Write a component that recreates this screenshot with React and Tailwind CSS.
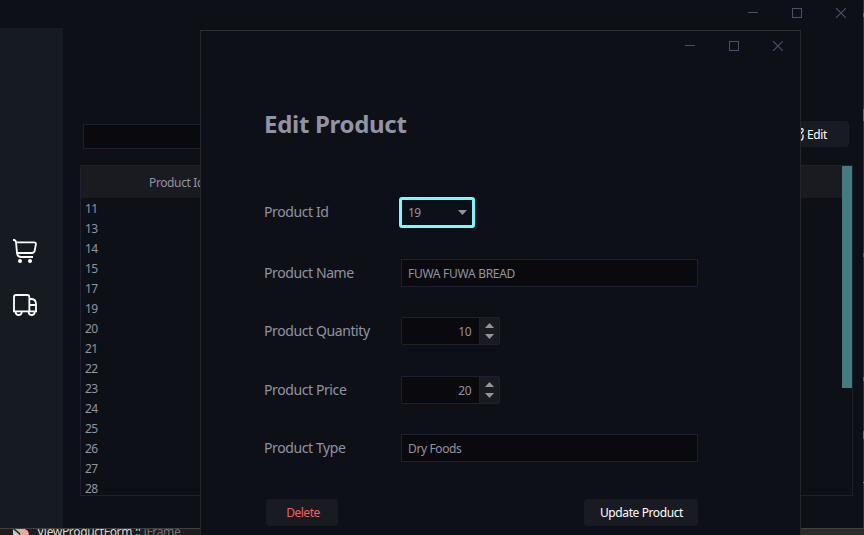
import React from "react";

const rows = [11, 13, 14, 15, 17, 19, 20, 21, 22, 23, 24, 25, 26, 27, 28];

function WindowControls() {
  return (
    <svg className="block h-[10px] w-[98px]" viewBox="0 0 98 10" fill="none" stroke="#4b506a" shapeRendering="crispEdges">
      <path d="M0 4.5H10M44.5 .5H53.5V9.5H44.5Z" />
      <path d="M88 0L98 10M98 0L88 10" shapeRendering="auto" strokeWidth="1.1" />
    </svg>
  );
}

function CartIcon() {
  return (
    <svg className="block h-6 w-6" viewBox="0 0 72 72" fill="none" stroke="#fff" strokeWidth="5.5" strokeLinejoin="round">
      <path d="M0 3H4Q8 4 9 9L12 42H56Q63 42 65 35L68.5 17Q69.5 10 63 10H9" />
      <path d="M12 40Q12 54 25 54H60" />
      <circle cx="21" cy="66" r="6" fill="#fff" stroke="none" />
      <circle cx="51" cy="66" r="6" fill="#fff" stroke="none" />
    </svg>
  );
}

function TruckIcon() {
  return (
    <svg className="block h-[22px] w-6" viewBox="0 0 72 66" fill="none" stroke="#fff" strokeWidth="5.5" strokeLinejoin="round">
      <path d="M3 52V9Q3 3 9 3H43Q49 3 49 9V52M49 15H56Q69 16 69 30V52M49 33H69M0 52H72" />
      <path d="M8 52V55Q9 63 17 63T26 55V52M47 52V55Q48 63 56 63T65 55V52" />
    </svg>
  );
}

function Arrow({ up }) {
  return (
    <svg className="block h-[5px] w-[9px]" viewBox="0 0 9 5" fill="#9395a3">
      <path d={up ? "M4.5 0L9 5H0Z" : "M0 0H9L4.5 5Z"} />
    </svg>
  );
}

function Field({ label, children, className }) {
  return (
    <div className={"flex items-center " + className}>
      <div className="w-[137px] shrink-0 whitespace-nowrap pb-[2px] text-[14px] tracking-[-0.4px] text-[#9094a1]">{label}</div>
      {children}
    </div>
  );
}

function TextBox({ children }) {
  return (
    <div className="flex h-7 w-[297px] items-center border border-[#1e2030] bg-[#0a0a0e] px-1.5 pt-[2px] text-[12px] tracking-[-0.28px]">
      {children}
    </div>
  );
}

function Spinner({ value }) {
  return (
    <div className="flex h-7 w-[99px] overflow-hidden rounded-[2px] border border-[#1e2030] bg-[#0a0a0e] text-[12px] tracking-[-0.5px]">
      <div className="flex flex-1 items-center justify-end pr-[8px] pt-[2px]">{value}</div>
      <div className="flex w-5 flex-col items-center justify-center gap-[6px] border-l border-[#1e2030] bg-[#1a1a21]">
        <Arrow up />
        <Arrow />
      </div>
    </div>
  );
}

function Dialog() {
  return (
    <section className="absolute left-[200px] top-[30px] h-[506px] w-[601px] border border-[#24252a] border-t-[#303135] bg-[#0e1018]">
      <div className="flex h-[30px] items-center justify-end pr-[17px]">
        <WindowControls />
      </div>
      <div className="pl-[63px]">
        <h1 className="mt-[47px] h-8 whitespace-nowrap text-[24px] font-bold leading-8 tracking-[-0.3px] text-[#9194a3]">Edit Product</h1>
        <Field label="Product Id" className="mt-[57px] h-[31px]">
          <div className="-ml-[2px] flex h-[31px] w-[76px] items-center justify-between rounded-[3px] border-[3px] border-[#79fbfd] pl-[6px] pr-[5px] text-[12px] tracking-[-0.5px]">
            19
            <Arrow />
          </div>
        </Field>
        <Field label="Product Name" className="mt-[31px]">
          <TextBox>FUWA FUWA BREAD</TextBox>
        </Field>
        <Field label="Product Quantity" className="mt-[30px]">
          <Spinner value="10" />
        </Field>
        <Field label="Product Price" className="mt-[31px]">
          <Spinner value="20" />
        </Field>
        <Field label="Product Type" className="mt-[30px]">
          <TextBox><span className="tracking-[-0.38px]">Dry Foods</span></TextBox>
        </Field>
        <div className="ml-[2px] mt-[37px] flex w-[432px] justify-between text-[12px]">
          <button className="h-[27px] w-[72px] rounded-[4px] bg-[#191b23] pl-[2px] tracking-[-0.5px] text-[#f75d5d]">Delete</button>
          <button className="h-[27px] w-[114px] rounded-[4px] bg-[#191b23] pl-[1px] tracking-[-0.4px] text-white">Update Product</button>
        </div>
      </div>
    </section>
  );
}

export default function App() {
  return (
    <div className="relative flex h-[535px] w-[864px] flex-col overflow-hidden bg-[#2b2b2b] font-['Noto_Sans',sans-serif] text-[#9094a1]">
      <div className="flex h-[528px] shrink-0">
        <div className="w-[863px] bg-[#0e1018]">
          <header className="flex h-7 items-center justify-end pr-[17px] pb-[2px]">
            <WindowControls />
          </header>
          <div className="flex h-[500px]">
            <nav className="w-[63px] bg-[#161a21] pl-[13px] pt-[211px]">
              <CartIcon />
              <div className="mt-[31px]">
                <TruckIcon />
              </div>
            </nav>
            <main className="flex-1 pl-[17px] pr-[10px] pt-[93px]">
              <div className="flex h-[28px] items-start justify-between pl-[3px] pr-1">
                <div className="mt-[3px] h-[25px] w-[300px] border border-[#1e2030] bg-[#0a0a0e]" />
                <button className="flex h-[26px] w-[75px] items-center gap-[3px] rounded-[4px] bg-[#191b23] pl-[17px] text-[12px] tracking-[-0.4px] text-white">
                  <svg className="h-[15px] w-[13px]" viewBox="0 0 13 15" fill="none" stroke="#e7e7e7" strokeWidth="1.4">
                    <path d="M8 2H2V13.3H9Q12 13.3 12 10V7.5M6 8L10 2Q12.5 1 12 4L8 9Z" />
                  </svg>
                  <span className="pt-[2px]">Edit</span>
                </button>
              </div>
              <div className="mt-4 flex h-[331px] w-[773px] justify-between border border-[#1e2030]">
                <div className="flex-1">
                  <div className="flex h-8 items-center bg-[#1a1a21] pl-[68px] pt-[2px] text-[12px] tracking-[-0.38px]">Product Id</div>
                  <div className="h-[297px] pt-px">
                    {rows.map((id) => (
                      <div key={id} className="h-5 pl-1 text-[12px] leading-5 tracking-[-0.6px] last:h-4">{id}</div>
                    ))}
                  </div>
                </div>
                <div className="h-[222px] w-[10px] bg-[#447b7f]" />
              </div>
            </main>
          </div>
        </div>
        <div className="flex w-px flex-col bg-[#33343a]">
          <div className="mt-[13px] h-1 bg-[#5b6d72]" />
          <div className="mt-[92px] h-3 bg-[#8d5555]" />
          <div className="mt-[132px] h-1 bg-[#55606a]" />
          <div className="mt-[120px] h-1 bg-[#56686d]" />
          <div className="mt-[50px] h-2 bg-[#5b7080]" />
          <div className="mt-[43px] h-px bg-[#85858a]" />
        </div>
      </div>
      <footer className="flex h-[7px] shrink-0 border-t border-[#41413f] bg-[#2b2b2b]">
        <div className="flex h-[7px] w-[200px] bg-[#1e1e1e] pl-[12px] [clip-path:inset(0)]">
          <svg className="h-[7px] w-[18px] shrink-0" viewBox="0 0 18 7">
            <path d="M3 0H14L9 5Z" fill="#dfb66d" />
            <path d="M1 0L9 7H1Z" fill="#a9cde8" />
            <circle cx="12.5" cy="4.8" r="4.3" fill="#f2a4a4" />
          </svg>
          <div className="-mt-[6px] ml-[7px] whitespace-nowrap text-[12px] leading-[18px] tracking-[-0.33px] text-[#d8d8d8]">
            ViewProductForm :: <span className="text-[#747474]">JFrame</span>
          </div>
        </div>
      </footer>
      <Dialog />
    </div>
  );
}
